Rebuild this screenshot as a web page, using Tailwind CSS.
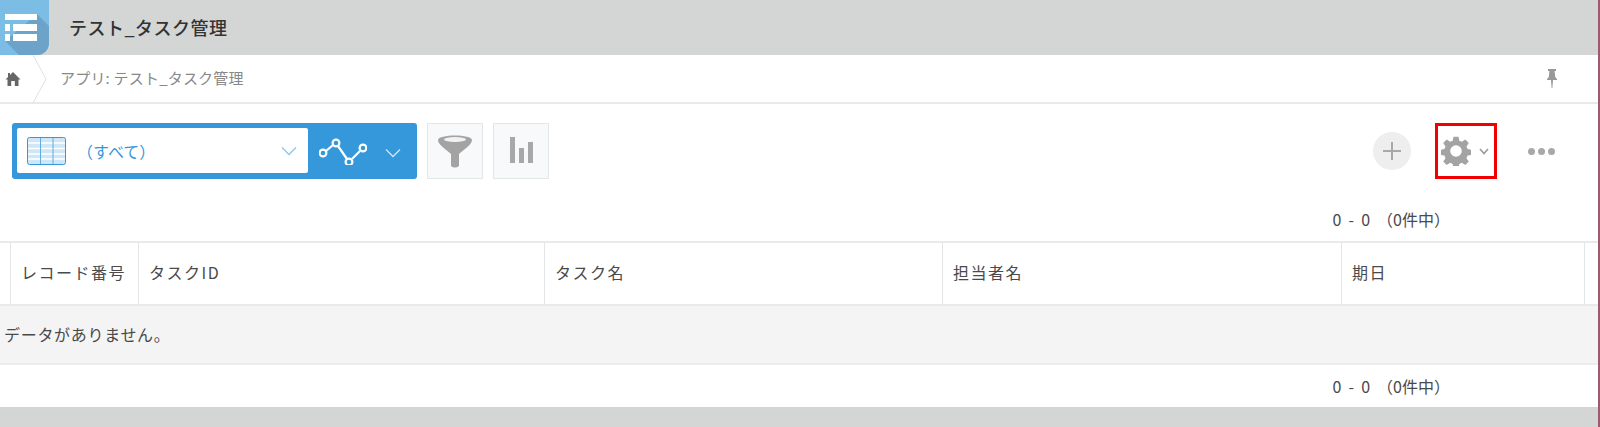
<!DOCTYPE html>
<html lang="ja">
<head>
    <meta charset="UTF-8">
    <title>テスト_タスク管理</title>
    <script src="https://cdn.jsdelivr.net/npm/@tailwindcss/browser@4"></script>
</head>
<body class="bg-white text-[#444] h-[427px] overflow-hidden font-['Noto_Sans_CJK_JP','Noto_Sans',sans-serif]">
<div class="relative h-[427px] flex flex-col">
    <!-- ヘッダー -->
    <header class="h-[55px] bg-[#d4d6d5] flex items-center shrink-0">
        <div class="w-[49px] h-[55px] rounded-br-xl overflow-hidden shrink-0">
            <svg width="49" height="55" viewBox="0 0 49 55">
                <rect width="49" height="55" fill="#7cbde6"/>
                <path d="M5 41 L19 55 H49 V26 L37 14 Z" fill="#6da3c8"/>
                <path d="M5 14h32v6H5z M5 24h5v7H5z M13 24h24v7H13z M5 34h5v7H5z M13 34h24v7H13z" fill="#fff"/>
            </svg>
        </div>
        <h1 class="ml-[20px] text-[18px] tracking-[.5px] font-medium text-[#333]">テスト_タスク管理</h1>
    </header>

    <!-- パンくず -->
    <nav class="relative h-[49px] border-b-2 border-[#e8eaea] flex items-center shrink-0">
        <svg class="ml-[5px]" width="16" height="16" viewBox="0 0 16 16" fill="#666">
            <path d="M8 1 L15.5 8.5 H13.5 V15 H9.8 V10 H6.2 V15 H2.5 V8.5 H.5 L3 6 V2 H5 V4 Z"/>
        </svg>
        <svg class="absolute left-[32px] top-0" width="16" height="48" viewBox="0 0 16 48" fill="none" stroke="#dfe2e2">
            <path d="M1 0 L14 24 L1 48"/>
        </svg>
        <span class="ml-[39px] text-[15px] tracking-[.2px] text-[#888]">アプリ: テスト_タスク管理</span>
        <svg class="ml-auto mr-[42px]" width="12" height="20" viewBox="0 0 12 20" fill="#999">
            <path d="M2 0h8v2H8.6l.6 6L11 10v1H7l-.6 8h-.8L5 11H1v-1l1.8-2 .6-6H2z"/>
        </svg>
    </nav>

    <!-- ツールバー -->
    <div class="h-[95px] pt-[19px] pl-[12px] pr-[45px] flex items-start shrink-0">
        <div class="w-[405px] h-[56px] bg-[#3498db] rounded-[3px] p-[5px] flex">
            <div class="w-[291px] h-[45px] bg-white rounded-[2px] flex items-center pl-[10px] pr-[11px]">
                <svg width="39" height="28" viewBox="0 0 39 28">
                    <rect x="0.5" y="0.5" width="38" height="27" rx="2" fill="#cfe6f6" stroke="#3498db"/>
                    <path d="M1 6H38 M1 11.5H38 M1 17H38 M1 22H38" stroke="#fff" stroke-width="1.4"/>
                    <path d="M13.5 1V27 M26 1V27" stroke="#5aaee3" stroke-width="1"/>
                </svg>
                <span class="ml-[11px] text-[16px] text-[#3498db]">（すべて）</span>
                <svg class="ml-auto" width="16" height="10" viewBox="0 0 16 10" fill="none" stroke="#8cc6ec" stroke-width="1.3">
                    <path d="M1 1.5 L8 8.5 L15 1.5"/>
                </svg>
            </div>
            <svg class="ml-[11px] mt-[9px]" width="48" height="28" viewBox="0 0 48 28" fill="none" stroke="#fff" stroke-width="2.2">
                <path d="M7 14 L14 8 M19 9 L28 22 M33 22 L41 14"/>
                <circle cx="4" cy="16" r="3.4"/>
                <circle cx="17" cy="6" r="3.4"/>
                <circle cx="30" cy="25" r="3.4"/>
                <circle cx="44" cy="11" r="3.4"/>
            </svg>
            <svg class="ml-[18px] mt-[20px]" width="16" height="10" viewBox="0 0 16 10" fill="none" stroke="#cfe6f6" stroke-width="1.3">
                <path d="M1 1.5 L8 8.5 L15 1.5"/>
            </svg>
        </div>
        <button class="ml-[10px] w-[56px] h-[56px] bg-[#f7f9fa] border border-[#e3e7e8] flex items-center justify-center">
            <svg width="34" height="34" viewBox="0 0 34 34">
                <path d="M0 6 C0 0 34 0 34 6 C34 11 26 15 21 20 V32 Q17 35 13 32 V20 C8 15 0 11 0 6Z" fill="#a3a3a3"/>
                <ellipse cx="17" cy="5.5" rx="11" ry="2.5" fill="#f2f2f2"/>
            </svg>
        </button>
        <button class="ml-[10px] w-[56px] h-[56px] bg-[#f7f9fa] border border-[#e3e7e8] flex items-end justify-center gap-[4px] pb-[15px]">
            <span class="w-[5px] h-[26px] bg-[#a8a8a8]"></span>
            <span class="w-[5px] h-[15px] bg-[#a8a8a8]"></span>
            <span class="w-[5px] h-[21px] bg-[#a8a8a8]"></span>
        </button>

        <div class="ml-auto flex items-center h-[56px]">
            <button class="w-[38px] h-[38px] rounded-full bg-[#eeeeee] flex items-center justify-center">
                <svg width="20" height="20" viewBox="0 0 20 20" stroke="#a8a8a8" stroke-width="2">
                    <path d="M10 1V19 M1 10H19"/>
                </svg>
            </button>
            <button class="ml-[24px] w-[62px] h-[56px] border-[3px] border-[#f00000] flex items-center pl-[3px]">
                <svg width="30" height="30" viewBox="0 0 30 30" fill="#a3a3a3">
                    <path fill-rule="evenodd" d="M12.5 1h5l.8 4 2.6 1.1 3.4-2.3 3.5 3.5-2.3 3.4 1.1 2.6 4 .8v5l-4 .8-1.1 2.6 2.3 3.4-3.5 3.5-3.4-2.3-2.6 1.1-.8 4h-5l-.8-4-2.6-1.1-3.4 2.3-3.5-3.5 2.3-3.4-1.1-2.6-4-.8v-5l4-.8 1.1-2.6-2.3-3.4 3.5-3.5 3.4 2.3 2.6-1.1zM15 9.5a5.8 5.8 0 1 0 0 11.6 5.8 5.8 0 0 0 0-11.6z" transform="translate(0 -.3)"/>
                </svg>
                <svg class="ml-[8px]" width="10" height="7" viewBox="0 0 10 7" fill="none" stroke="#999" stroke-width="1.6">
                    <path d="M1 1 L5 5.5 L9 1"/>
                </svg>
            </button>
            <div class="ml-[31px] flex gap-[3px]">
                <span class="w-[7px] h-[7px] rounded-full bg-[#a8a8a8]"></span>
                <span class="w-[7px] h-[7px] rounded-full bg-[#a8a8a8]"></span>
                <span class="w-[7px] h-[7px] rounded-full bg-[#a8a8a8]"></span>
            </div>
        </div>
    </div>

    <!-- 件数 -->
    <div class="h-[42px] flex justify-end items-start pr-[150px] text-[16px] [word-spacing:3.5px] text-[#4a4a4a] shrink-0 pt-[9px] leading-[22px]">0 - 0 （0件中）</div>

    <!-- テーブル -->
    <div class="h-[65px] border-y-2 border-[#e9ebeb] flex text-[16px] text-[#4a4a4a] shrink-0">
        <div class="w-[11px] border-r border-[#e3e6e6]"></div>
        <div class="w-[128px] border-r border-[#e3e6e6] pl-[10px] pb-[3px] flex items-center tracking-[1.5px]">レコード番号</div>
        <div class="w-[406px] border-r border-[#e3e6e6] pl-[10px] pb-[3px] flex items-center tracking-[1.5px]">タスクID</div>
        <div class="w-[398px] border-r border-[#e3e6e6] pl-[10px] pb-[3px] flex items-center tracking-[1.5px]">タスク名</div>
        <div class="w-[399px] border-r border-[#e3e6e6] pl-[10px] pb-[3px] flex items-center tracking-[1.5px]">担当者名</div>
        <div class="w-[243px] border-r border-[#e3e6e6] pl-[10px] pb-[3px] flex items-center tracking-[1.5px]">期日</div>
    </div>
    <div class="h-[59px] bg-[#f4f4f4] border-b-2 border-[#eceeee] flex items-center pl-[4px] pb-[2px] text-[16px] tracking-[.7px] text-[#4a4a4a] shrink-0">データがありません。</div>
    <div class="h-[42px] flex justify-end items-center pr-[150px] text-[16px] [word-spacing:3.5px] text-[#4a4a4a] shrink-0">0 - 0 （0件中）</div>
    <footer class="flex-1 bg-[#d4d6d5]"></footer>

    <!-- 右端のはみ出し -->
    <div class="absolute right-0 top-0 bottom-0 w-[2px] bg-[#9c5a6c]"></div>
</div>
</body>
</html>
